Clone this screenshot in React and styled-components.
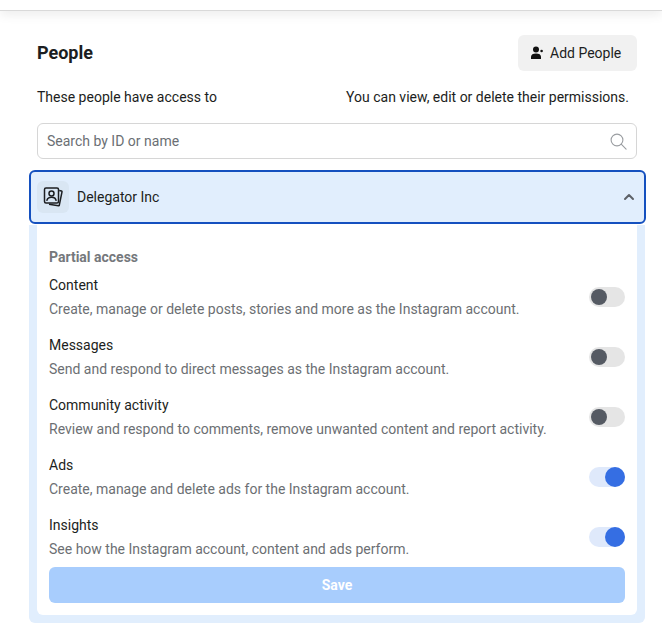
import React from "react";
import styled, { createGlobalStyle } from "styled-components";

const GlobalStyle = createGlobalStyle`
  html, body {
    margin: 0;
    padding: 0;
    background: #fff;
    font-family: Roboto, "Liberation Sans", sans-serif;
    color: #1c1e21;
  }
  * {
    box-sizing: border-box;
  }
`;

const permissions = [
  { title: "Content", text: "Create, manage or delete posts, stories and more as the Instagram account.", on: false },
  { title: "Messages", text: "Send and respond to direct messages as the Instagram account.", on: false },
  { title: "Community activity", text: "Review and respond to comments, remove unwanted content and report activity.", on: false },
  { title: "Ads", text: "Create, manage and delete ads for the Instagram account.", on: true },
  { title: "Insights", text: "See how the Instagram account, content and ads perform.", on: true },
];

export default function App() {
  return (
    <Page>
      <GlobalStyle />
      <TopBar />
      <Main>
        <Header>
          <Title>People</Title>
          <AddButton>
            <svg width="14" height="14" viewBox="0 0 14 14" fill="#111">
              <circle cx="6" cy="3.6" r="3" />
              <path d="M1 13v-2.2C1 8.6 3 7.4 6 7.4s5 1.2 5 3.4V13z" />
              <circle cx="11.6" cy="5" r="1.3" />
            </svg>
            Add People
          </AddButton>
        </Header>
        <Description>
          <span>These people have access to</span>
          <span>You can view, edit or delete their permissions.</span>
        </Description>
        <SearchBox>
          <SearchInput placeholder="Search by ID or name" />
          <svg width="17" height="17" viewBox="0 0 17 17" fill="none" stroke="#9a9da1" strokeWidth="1.1">
            <circle cx="7" cy="7" r="5.9" />
            <path d="M11.2 11.2l4.9 4.9" strokeLinecap="round" />
          </svg>
        </SearchBox>
        <Accordion>
          <AccordionHead>
            <IconTile>
              <svg width="22" height="22" viewBox="0 0 22 22" fill="none" stroke="#1c1e21" strokeWidth="1.5" strokeLinejoin="round">
                <rect x="2.5" y="2" width="14" height="15" rx="1.5" />
                <circle cx="9.500" cy="7.400" r="2.500" />
                <path d="M4.800 14.800c.3-2.500 2.200-3.600 4.700-3.600s4.400 1.100 4.700 3.600" />
                <path d="M17.200 4.600l2.300.5c.4.100.6.400.5.800l-2.700 13.300c-.1.400-.4.600-.8.500L7 18.200" />
              </svg>
            </IconTile>
            <AccountName>Delegator Inc</AccountName>
            <svg width="12" height="8" viewBox="0 0 12 8" fill="none" stroke="#5d6167" strokeWidth="2" strokeLinecap="round" strokeLinejoin="round">
              <path d="M2 6l4-4 4 4" />
            </svg>
          </AccordionHead>
          <Panel>
            <PanelInner>
              <SectionLabel>Partial access</SectionLabel>
              <PermissionList>
                {permissions.map((p) => (
                  <PermissionRow key={p.title}>
                    <PermissionText>
                      <PermissionTitle>{p.title}</PermissionTitle>
                      <PermissionNote>{p.text}</PermissionNote>
                    </PermissionText>
                    <Toggle $on={p.on}>
                      <Knob $on={p.on} />
                    </Toggle>
                  </PermissionRow>
                ))}
              </PermissionList>
              <SaveButton>Save</SaveButton>
            </PanelInner>
          </Panel>
        </Accordion>
      </Main>
    </Page>
  );
}

const Page = styled.div`
  width: 662px;
  height: 634px;
  overflow: hidden;
  background: #fff;
`;

const TopBar = styled.div`
  height: 11px;
  background: #fff;
  border-bottom: 1px solid #d9d9d9;
  box-shadow: 0 3px 12px rgba(0, 0, 0, 0.09);
`;

const Main = styled.main`
  padding: 24px 25px 0 37px;
`;

const Header = styled.div`
  display: flex;
  align-items: center;
  justify-content: space-between;
`;

const Title = styled.h1`
  margin: 0;
  font-size: 18px;
  line-height: 20px;
  font-weight: 700;
  color: #1c1e21;
`;

const AddButton = styled.button`
  display: flex;
  align-items: center;
  gap: 6px;
  height: 36px;
  width: 119px;
  padding: 0 0 0 12px;
  border: 0;
  border-radius: 6px;
  background: #f1f1f1;
  font: 400 14px/20px Roboto, "Liberation Sans", sans-serif;
  color: #1c1e21;
`;

const Description = styled.div`
  display: flex;
  justify-content: space-between;
  margin-top: 16px;
  padding-right: 8px;
  font-size: 14px;
  line-height: 20px;
  color: #1c1e21;
`;

const SearchBox = styled.label`
  display: flex;
  align-items: center;
  height: 36px;
  margin-top: 16px;
  padding: 0 9px 0 9px;
  border: 1px solid #d6d6d6;
  border-radius: 6px;
  background: #fff;
`;

const SearchInput = styled.input`
  flex: 1;
  border: 0;
  outline: 0;
  padding: 0;
  background: transparent;
  font: 400 14px/20px Roboto, "Liberation Sans", sans-serif;
  color: #1c1e21;
  &::placeholder {
    color: #6b6f74;
    opacity: 1;
  }
`;

const Accordion = styled.section`
  margin: 11px -9px 0 -8px;
`;

const AccordionHead = styled.div`
  display: flex;
  align-items: center;
  height: 54px;
  padding: 0 9px 0 6px;
  border: 2px solid #1450bf;
  border-radius: 6px;
  background: #e1eefd;
`;

const IconTile = styled.div`
  display: flex;
  align-items: center;
  justify-content: center;
  width: 32px;
  height: 32px;
  border-radius: 6px;
  background: #d9e6f3;
`;

const AccountName = styled.span`
  flex: 1;
  margin-left: 8px;
  font-size: 14px;
  line-height: 20px;
  color: #1c1e21;
`;

const Panel = styled.div`
  margin: 1px 1px 0 0;
  padding: 0 8px 8px;
  border-radius: 0 0 6px 6px;
  background: #e1eefd;
`;

const PanelInner = styled.div`
  padding: 22px 12px 12px;
  border-radius: 0 0 6px 6px;
  background: #fff;
`;

const SectionLabel = styled.div`
  font-size: 14px;
  line-height: 20px;
  font-weight: 700;
  color: #75787c;
`;

const PermissionList = styled.div`
  display: flex;
  flex-direction: column;
  gap: 16px;
  margin-top: 8px;
`;

const PermissionRow = styled.div`
  display: flex;
  align-items: flex-start;
  justify-content: space-between;
`;

const PermissionText = styled.div`
  display: flex;
  flex-direction: column;
  gap: 4px;
`;

const PermissionTitle = styled.div`
  font-size: 14px;
  line-height: 20px;
  color: #1c1e21;
`;

const PermissionNote = styled.div`
  font-size: 14px;
  line-height: 20px;
  color: #6c6f73;
`;

const Toggle = styled.div`
  display: flex;
  align-items: center;
  justify-content: ${(p) => (p.$on ? "flex-end" : "flex-start")};
  width: 36px;
  height: 20px;
  margin-top: 12px;
  padding: ${(p) => (p.$on ? "0" : "0 2px")};
  border-radius: 10px;
  background: ${(p) => (p.$on ? "#dfe9fb" : "#e5e5e5")};
`;

const Knob = styled.div`
  width: ${(p) => (p.$on ? "20px" : "16px")};
  height: ${(p) => (p.$on ? "20px" : "16px")};
  border-radius: 50%;
  background: ${(p) => (p.$on ? "#356ee3" : "#555a63")};
`;

const SaveButton = styled.button`
  display: block;
  width: 100%;
  height: 36px;
  margin-top: 8px;
  border: 0;
  border-radius: 6px;
  background: #a8cdfd;
  font: 700 14px/20px Roboto, "Liberation Sans", sans-serif;
  color: #fff;
`;
